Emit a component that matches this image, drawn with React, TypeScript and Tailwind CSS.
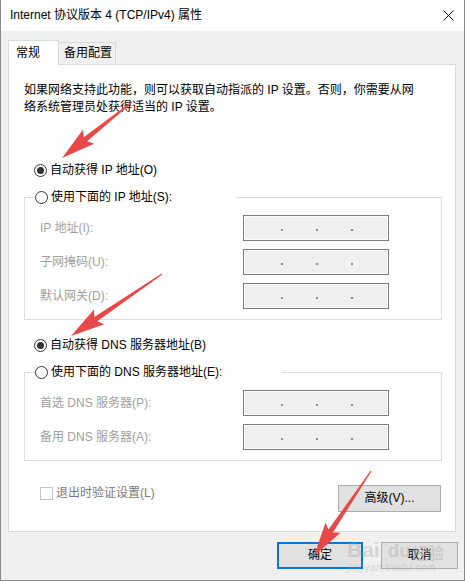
import React from 'react';

const FONT = '"Liberation Sans", "Noto Sans CJK SC", sans-serif';

type Pt = [number, number];

function arrowPoints(tail: Pt, tip: Pt, headLen = 30, headW = 9, shaftW = 2.6) {
  const [x1, y1] = tail;
  const [x2, y2] = tip;
  const len = Math.hypot(x2 - x1, y2 - y1);
  const ux = (x2 - x1) / len;
  const uy = (y2 - y1) / len;
  const nx = -uy;
  const ny = ux;
  const bx = x2 - ux * headLen;
  const by = y2 - uy * headLen;
  const barbX = bx - ux * 4;
  const barbY = by - uy * 4;
  const pts: Pt[] = [
    [x1 + nx * 0.6, y1 + ny * 0.6],
    [bx + nx * shaftW, by + ny * shaftW],
    [barbX + nx * headW, barbY + ny * headW],
    [x2, y2],
    [barbX - nx * headW, barbY - ny * headW],
    [bx - nx * shaftW, by - ny * shaftW],
    [x1 - nx * 0.6, y1 - ny * 0.6],
  ];
  return pts.map(p => `${p[0].toFixed(1)},${p[1].toFixed(1)}`).join(' ');
}

function Radio({ checked }: { checked?: boolean }) {
  return (
    <span className="flex h-[13px] w-[13px] shrink-0 items-center justify-center rounded-full border border-[#333333] bg-white">
      {checked && <span className="h-[7px] w-[7px] rounded-full bg-[#333333]" />}
    </span>
  );
}

function IpBox() {
  return (
    <div className="flex h-[26px] w-[146px] items-center border border-[#7a7a7a] bg-[#f0f0f0] pl-[37px] shadow-[inset_0_0_0_1px_#ffffff]">
      <span className="mt-[4px] h-[2px] w-[2px] bg-[#8c8c8c]" />
      <span className="ml-[33px] mt-[4px] h-[2px] w-[2px] bg-[#8c8c8c]" />
      <span className="ml-[33px] mt-[4px] h-[2px] w-[2px] bg-[#8c8c8c]" />
    </div>
  );
}

function FieldRow({ label }: { label: string }) {
  return (
    <div className="flex h-[26px] items-center">
      <span className="w-[218px] pl-[15px] text-[#a0a0a0]">{label}</span>
      <IpBox />
    </div>
  );
}

function GroupBox({ legend, legendWidth, fields }: { legend: string; legendWidth: string; fields: string[] }) {
  return (
    <fieldset className="w-[418px] border border-[#dcdcdc] pb-[10px]">
      <legend className={`ml-[10px] flex h-[17px] items-center gap-[3px] ${legendWidth}`}>
        <Radio />
        <span>{legend}</span>
      </legend>
      <div className="mt-[9px] flex flex-col gap-[8px]">
        {fields.map(f => (
          <FieldRow key={f} label={f} />
        ))}
      </div>
    </fieldset>
  );
}

function WinButton({ label, wide, primary }: { label: string; wide: string; primary?: boolean }) {
  return (
    <div
      className={`flex h-[27px] items-center justify-center bg-[#e1e1e1] ${wide} ${
        primary ? 'border-2 border-[#0078d7]' : 'border border-[#adadad]'
      }`}
    >
      {label}
    </div>
  );
}

export default function App() {
  return (
    <div
      className="relative h-[581px] w-[465px] overflow-hidden border-x border-b border-[#8a8a8a] bg-[#f0f0f0] text-[12px] leading-[17px] text-black"
      style={{ fontFamily: FONT }}
    >
      {/* Title bar */}
      <div className="flex h-[31px] items-center justify-between bg-white pl-[9px] pr-[9px]">
        <span>Internet 协议版本 4 (TCP/IPv4) 属性</span>
        <svg width="11" height="11" viewBox="0 0 11 11" className="mr-[1px]">
          <path d="M0.5 0.5 L10.5 10.5 M10.5 0.5 L0.5 10.5" stroke="#111" strokeWidth="1" />
        </svg>
      </div>

      <div className="pl-[7px] pr-[8px] pt-[9px]">
        {/* Tabs */}
        <div className="relative z-10 flex h-[24px] items-end">
          <div className="-mb-px flex h-[25px] w-[51px] items-center border border-b-0 border-[#d9d9d9] bg-white pl-[7px]">
            常规
          </div>
          <div className="flex h-[22px] w-[57px] items-center border border-b-0 border-l-0 border-[#d9d9d9] bg-[#f0f0f0] pl-[5px]">
            备用配置
          </div>
        </div>

        {/* Panel */}
        <div className="h-[468px] border border-[#d9d9d9] bg-white pl-[15px] pt-[17px]">
          <p className="whitespace-nowrap">
            如果网络支持此功能，则可以获取自动指派的 IP 设置。否则，你需要从网
            <br />
            络系统管理员处获得适当的 IP 设置。
          </p>

          <div className="ml-[10px] mt-[46px] flex h-[17px] items-center gap-[3px]">
            <Radio checked />
            <span>自动获得 IP 地址(O)</span>
          </div>
          <div className="mt-[10px]">
            <GroupBox
              legend="使用下面的 IP 地址(S):"
              legendWidth="w-[201px]"
              fields={['IP 地址(I):', '子网掩码(U):', '默认网关(D):']}
            />
          </div>

          <div className="ml-[10px] mt-[17px] flex h-[17px] items-center gap-[3px]">
            <Radio checked />
            <span>自动获得 DNS 服务器地址(B)</span>
          </div>
          <div className="mt-[10px]">
            <GroupBox
              legend="使用下面的 DNS 服务器地址(E):"
              legendWidth="w-[247px]"
              fields={['首选 DNS 服务器(P):', '备用 DNS 服务器(A):']}
            />
          </div>

          <div className="mt-[24px] flex w-[418px] items-start justify-between">
            <div className="ml-[16px] flex h-[17px] items-center gap-[3px] text-[#7a7a7a]">
              <span className="h-[13px] w-[13px] border border-[#c4c4c4] bg-white" />
              <span>退出时验证设置(L)</span>
            </div>
            <div className="mr-[1px]">
              <WinButton label="高级(V)..." wide="w-[103px]" />
            </div>
          </div>
        </div>

        {/* Dialog buttons */}
        <div className="-mr-[2px] mt-[10px] flex justify-end gap-[18px]">
          <WinButton label="确定" wide="w-[86px]" primary />
          <WinButton label="取消" wide="w-[77px]" />
        </div>
      </div>

      {/* Baidu watermark */}
      <div className="pointer-events-none absolute left-[346px] top-[539px] flex flex-col items-start whitespace-nowrap leading-none text-[rgba(170,170,170,0.4)]">
        <div className="flex items-end">
          <span className="text-[21px] font-bold">Bai</span>
          <span className="ml-[8px] text-[19px] font-bold">du</span>
          <span className="ml-[1px] text-[16px] font-bold" style={{ fontFamily: '"Noto Sans CJK SC", sans-serif' }}>
            经验
          </span>
        </div>
        <span className="mt-[3px] text-[10px] tracking-[0.5px]">jingyan.baidu.com</span>
      </div>

      {/* Red annotation arrows */}
      <svg className="pointer-events-none absolute inset-0" width="465" height="581">
        <polygon points={arrowPoints([131, 102], [61, 158])} fill="#e94848" />
        <polygon points={arrowPoints([161, 274], [70, 336])} fill="#e94848" />
        <polygon points={arrowPoints([370, 471], [313, 556])} fill="#e94848" />
      </svg>
    </div>
  );
}
